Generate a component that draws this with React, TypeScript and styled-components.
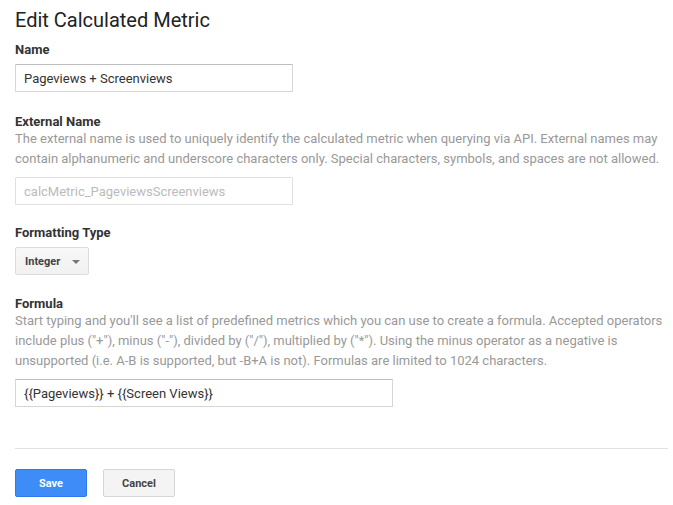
import React, { FC } from "react";
import styled, { createGlobalStyle } from "styled-components";

const GlobalStyle = createGlobalStyle`
  html, body {
    margin: 0;
    padding: 0;
    background: #fff;
  }
  body {
    font-family: Roboto, "Liberation Sans", Arial, sans-serif;
    color: #222;
  }
`;

const Page = styled.div`
  padding: 8px 5px 0 15px;
  width: 653px;
`;

const Title = styled.h1`
  margin: 0 0 10px;
  font-size: 20px;
  font-weight: 400;
  line-height: 24px;
  color: #222;
`;

const Field = styled.div<{ $gap?: number }>`
  display: flex;
  flex-direction: column;
  align-items: flex-start;
  margin-bottom: ${(p) => p.$gap ?? 22}px;
`;

const Label = styled.label`
  font-size: 13px;
  font-weight: 700;
  line-height: 16px;
  color: #333;
  margin-bottom: 6px;
`;

const Help = styled.p`
  margin: -7px 0 8px;
  font-size: 13px;
  line-height: 20px;
  color: #999;
`;

const TextInput = styled.input<{ $width: number }>`
  box-sizing: border-box;
  width: ${(p) => p.$width}px;
  height: 28px;
  padding: 0 8px;
  border: 1px solid #d6d6d6;
  border-top-color: #bdbdbd;
  border-radius: 1px;
  font-family: inherit;
  font-size: 13px;
  color: #333;
  outline: none;
  &:disabled {
    background: #fff;
    color: #bbb;
    border-color: #e0e0e0;
  }
`;

const Select = styled.div`
  box-sizing: border-box;
  display: flex;
  align-items: center;
  gap: 12px;
  height: 28px;
  padding: 0 8px 0 9px;
  border: 1px solid #dcdcdc;
  border-radius: 2px;
  background: linear-gradient(#f8f8f8, #f1f1f1);
  font-size: 11px;
  font-weight: 700;
  color: #444;
`;

const Caret = styled.span`
  width: 0;
  height: 0;
  border-left: 4px solid transparent;
  border-right: 4px solid transparent;
  border-top: 4px solid #777;
  margin-top: 2px;
`;

const Divider = styled.hr`
  border: 0;
  border-top: 1px solid #e2e2e2;
  margin: 41px 0 20px;
`;

const Actions = styled.div`
  display: flex;
  gap: 16px;
`;

const Button = styled.button<{ $primary?: boolean }>`
  box-sizing: border-box;
  width: 72px;
  height: 28px;
  border-radius: 2px;
  font-family: inherit;
  font-size: 11px;
  font-weight: 700;
  cursor: pointer;
  border: 1px solid ${(p) => (p.$primary ? "#3079ed" : "#d6d6d6")};
  background: ${(p) => (p.$primary ? "#3d8cf8" : "#f4f4f4")};
  color: ${(p) => (p.$primary ? "#fff" : "#444")};
`;

const App: FC = () => {
  return (
    <>
      <GlobalStyle />
      <Page>
        <Title>Edit Calculated Metric</Title>
        <Field $gap={22}>
          <Label>Name</Label>
          <TextInput $width={278} defaultValue="Pageviews + Screenviews" />
        </Field>
        <Field $gap={20}>
          <Label>External Name</Label>
          <Help>
            The external name is used to uniquely identify the calculated metric
            when querying via API. External names may contain alphanumeric and
            underscore characters only. Special characters, symbols, and spaces
            are not allowed.
          </Help>
          <TextInput
            $width={278}
            disabled
            defaultValue="calcMetric_PageviewsScreenviews"
          />
        </Field>
        <Field $gap={21}>
          <Label>Formatting Type</Label>
          <Select>
            Integer
            <Caret />
          </Select>
        </Field>
        <Field $gap={0}>
          <Label>Formula</Label>
          <Help>
            Start typing and you'll see a list of predefined metrics which you
            can use to create a formula. Accepted operators include plus ("+"),
            minus ("-"), divided by ("/"), multiplied by ("*"). Using the minus
            operator as a negative is unsupported (i.e. A-B is supported, but
            -B+A is not). Formulas are limited to 1024 characters.
          </Help>
          <TextInput
            $width={378}
            defaultValue="{{Pageviews}} + {{Screen Views}}"
          />
        </Field>
        <Divider />
        <Actions>
          <Button $primary>Save</Button>
          <Button>Cancel</Button>
        </Actions>
      </Page>
    </>
  );
};

export default App;
